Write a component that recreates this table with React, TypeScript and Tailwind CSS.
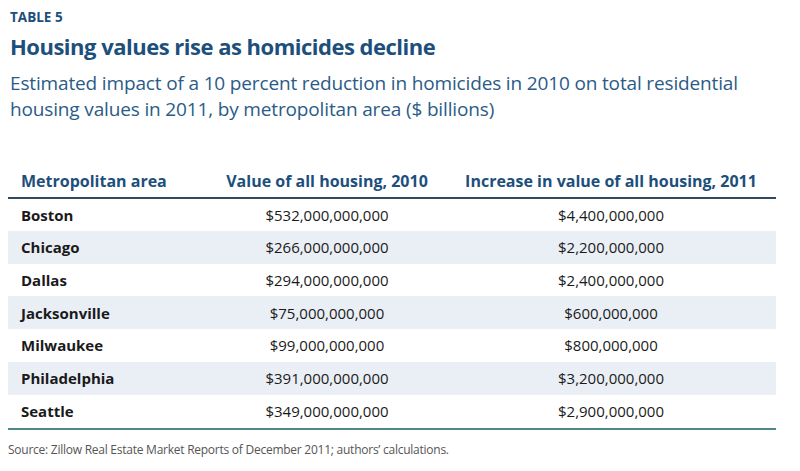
const ROWS = [
  { area: "Boston", value: "$532,000,000,000", increase: "$4,400,000,000" },
  { area: "Chicago", value: "$266,000,000,000", increase: "$2,200,000,000" },
  { area: "Dallas", value: "$294,000,000,000", increase: "$2,400,000,000" },
  { area: "Jacksonville", value: "$75,000,000,000", increase: "$600,000,000" },
  { area: "Milwaukee", value: "$99,000,000,000", increase: "$800,000,000" },
  { area: "Philadelphia", value: "$391,000,000,000", increase: "$3,200,000,000" },
  { area: "Seattle", value: "$349,000,000,000", increase: "$2,900,000,000" },
]

export default function App() {
  return (
    <div className="h-[471px] w-[800px] overflow-hidden bg-white font-['Open_Sans',sans-serif]">
      <header className="px-[10px] pt-[8px]">
        <p className="text-[13.5px] font-bold leading-[18px] text-[#1d4f7c]">TABLE 5</p>
        <h1 className="mt-[6px] text-[22px] font-bold leading-[28px] tracking-[-0.5px] text-[#1d4f7c]">
          Housing values rise as homicides decline
        </h1>
        <p className="mt-[10px] w-[770px] text-[19px] leading-[26px] tracking-[-0.15px] text-[#2b5b87]">
          Estimated impact of a 10 percent reduction in homicides in 2010 on total residential housing values in
          2011, by metropolitan area ($ billions)
        </p>
      </header>

      <table className="ml-[8px] mt-[42px] w-[768px] table-fixed border-collapse whitespace-nowrap">
        <colgroup>
          <col className="w-[184px]" />
          <col className="w-[270px]" />
          <col className="w-[314px]" />
        </colgroup>
        <thead>
          <tr className="border-b-2 border-[#2e4a5c] text-[16px] font-bold text-[#1d4f7c]">
            <th className="h-[34px] pl-[13px] text-left align-middle">Metropolitan area</th>
            <th className="text-center">Value of all housing, 2010</th>
            <th className="pr-[16px] text-center">Increase in value of all housing, 2011</th>
          </tr>
        </thead>
        <tbody className="text-[15px] text-[#1a1a1a]">
          {ROWS.map((row, i) => (
            <tr key={row.area} className={i % 2 === 1 ? "bg-[#eaeff6]" : "bg-white"}>
              <td className="h-[32.8px] pl-[13px] font-bold">{row.area}</td>
              <td className="text-center">{row.value}</td>
              <td className="pr-[16px] text-center">{row.increase}</td>
            </tr>
          ))}
        </tbody>
      </table>
      <div className="ml-[8px] h-[2px] w-[768px] bg-[#4f8a8b]" />

      <p className="ml-[8px] mt-[11px] text-[12px] tracking-[-0.25px] text-[#555]">
        Source: Zillow Real Estate Market Reports of December 2011; authors’ calculations.
      </p>
    </div>
  )
}
